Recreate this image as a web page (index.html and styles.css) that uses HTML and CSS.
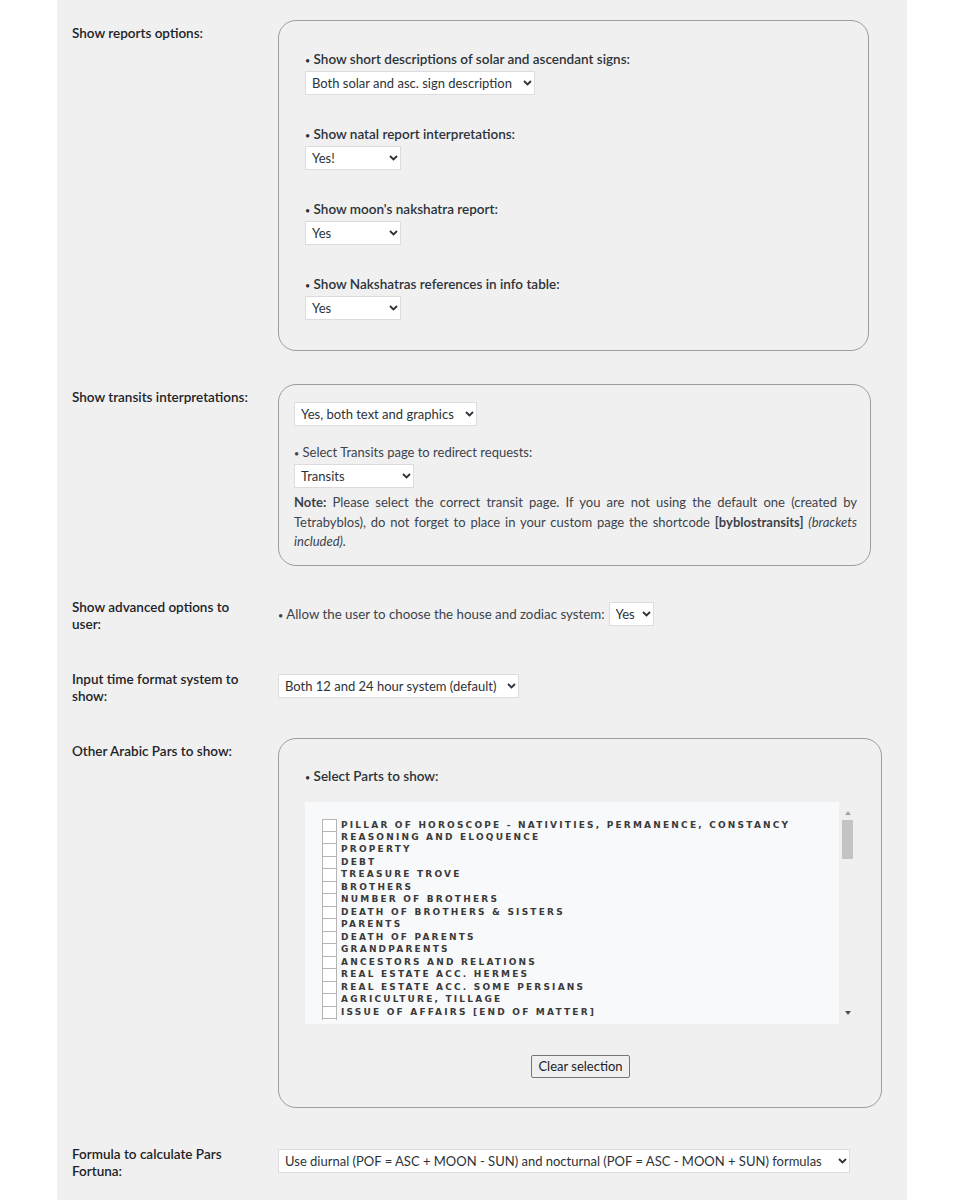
FILE: index.html
```html
<!DOCTYPE html>
<html lang="en">
<head>
  <meta charset="UTF-8" />
  <meta name="viewport" content="width=device-width, initial-scale=1.0"/>
  <title>Tetrabyblos Settings</title>
  <link rel="stylesheet" href="styles.css">
</head>
<body>
  <div class="settings">

    <div class="row">
      <div class="row-label">Show reports options:</div>
      <div class="row-field">
        <div class="group group-reports">
          <div class="opt">
            <label class="opt-label"><span class="dot">•</span> Show short descriptions of solar and ascendant signs:</label>
            <span class="pick w-solar">
              <select><option>Both solar and asc. sign description</option></select>
              <svg viewBox="0 0 9 6"><polyline points="1,1 4.5,4.5 8,1"/></svg>
            </span>
          </div>
          <div class="opt">
            <label class="opt-label"><span class="dot">•</span> Show natal report interpretations:</label>
            <span class="pick w-yes">
              <select><option>Yes!</option></select>
              <svg viewBox="0 0 9 6"><polyline points="1,1 4.5,4.5 8,1"/></svg>
            </span>
          </div>
          <div class="opt">
            <label class="opt-label"><span class="dot">•</span> Show moon's nakshatra report:</label>
            <span class="pick w-yes">
              <select><option>Yes</option></select>
              <svg viewBox="0 0 9 6"><polyline points="1,1 4.5,4.5 8,1"/></svg>
            </span>
          </div>
          <div class="opt">
            <label class="opt-label"><span class="dot">•</span> Show Nakshatras references in info table:</label>
            <span class="pick w-yes">
              <select><option>Yes</option></select>
              <svg viewBox="0 0 9 6"><polyline points="1,1 4.5,4.5 8,1"/></svg>
            </span>
          </div>
        </div>
      </div>
    </div>

    <div class="row">
      <div class="row-label">Show transits interpretations:</div>
      <div class="row-field">
        <div class="group group-transits">
          <span class="pick w-graphics">
            <select><option>Yes, both text and graphics</option></select>
            <svg viewBox="0 0 9 6"><polyline points="1,1 4.5,4.5 8,1"/></svg>
          </span>
          <label class="opt-label plain"><span class="dot">•</span> Select Transits page to redirect requests:</label>
          <span class="pick w-transits">
            <select><option>Transits</option></select>
            <svg viewBox="0 0 9 6"><polyline points="1,1 4.5,4.5 8,1"/></svg>
          </span>
          <p class="note"><b>Note:</b> Please select the correct transit page. If you are not using the default one (created by Tetrabyblos), do not forget to place in your custom page the shortcode <b>[byblostransits]</b> <i>(brackets included).</i></p>
        </div>
      </div>
    </div>

    <div class="row row-close">
      <div class="row-label">Show advanced options to user:</div>
      <div class="row-field inline">
        <span class="inline-text"><span class="dot">•</span> Allow the user to choose the house and zodiac system:</span>
        <span class="pick w-small">
          <select><option>Yes</option></select>
          <svg viewBox="0 0 9 6"><polyline points="1,1 4.5,4.5 8,1"/></svg>
        </span>
      </div>
    </div>

    <div class="row">
      <div class="row-label">Input time format system to show:</div>
      <div class="row-field inline">
        <span class="pick w-time">
          <select><option>Both 12 and 24 hour system (default)</option></select>
          <svg viewBox="0 0 9 6"><polyline points="1,1 4.5,4.5 8,1"/></svg>
        </span>
      </div>
    </div>

    <div class="row">
      <div class="row-label">Other Arabic Pars to show:</div>
      <div class="row-field">
        <div class="group group-parts">
          <label class="opt-label"><span class="dot">•</span> Select Parts to show:</label>
          <div class="parts-list">
            <ul class="parts-items">
              <li><span class="tick"></span>Pillar of horoscope - nativities, permanence, constancy</li>
              <li><span class="tick"></span>Reasoning and eloquence</li>
              <li><span class="tick"></span>Property</li>
              <li><span class="tick"></span>Debt</li>
              <li><span class="tick"></span>Treasure trove</li>
              <li><span class="tick"></span>Brothers</li>
              <li><span class="tick"></span>Number of brothers</li>
              <li><span class="tick"></span>Death of brothers &amp; sisters</li>
              <li><span class="tick"></span>Parents</li>
              <li><span class="tick"></span>Death of parents</li>
              <li><span class="tick"></span>Grandparents</li>
              <li><span class="tick"></span>Ancestors and relations</li>
              <li><span class="tick"></span>Real estate acc. Hermes</li>
              <li><span class="tick"></span>Real estate acc. some Persians</li>
              <li><span class="tick"></span>Agriculture, tillage</li>
              <li><span class="tick"></span>Issue of affairs [end of matter]</li>
              <li aria-hidden="true"><span class="tick"></span></li>
            </ul>
            <div class="scrollbar">
              <span class="arrow-up"></span>
              <span class="thumb"></span>
              <span class="arrow-down"></span>
            </div>
          </div>
          <div class="actions">
            <button type="button" class="clear-btn">Clear selection</button>
          </div>
        </div>
      </div>
    </div>

    <div class="row">
      <div class="row-label">Formula to calculate Pars Fortuna:</div>
      <div class="row-field inline">
        <span class="pick w-formula">
          <select><option>Use diurnal (POF = ASC + MOON - SUN) and nocturnal (POF = ASC - MOON + SUN) formulas</option></select>
          <svg viewBox="0 0 9 6"><polyline points="1,1 4.5,4.5 8,1"/></svg>
        </span>
      </div>
    </div>

  </div>
</body>
</html>
```

FILE: styles.css
```css
* {
  box-sizing: border-box;
}

body {
  margin: 0;
  background: #fff;
  font-family: 'Lato', 'Liberation Sans', sans-serif;
  font-size: 13px;
  color: #3c434a;
}

.settings {
  width: 850px;
  min-height: 1200px;
  margin-left: 57px;
  padding: 20px 15px 40px;
  background: #f0f0f1;
}

.row {
  display: flex;
  align-items: flex-start;
}

.row + .row {
  margin-top: 33px;
}

.row.row-close {
  margin-top: 28px;
}

.row-label {
  flex: 0 0 182px;
  margin-right: 24px;
  padding-top: 5px;
  line-height: 17px;
  font-size: 13.5px;
  font-weight: 600;
  color: #1d2327;
}

.row-field {
  flex: 1;
  min-width: 0;
}

.row-field.inline {
  display: flex;
  align-items: center;
  gap: 4px;
  padding-top: 8px;
}

.inline-text {
  font-size: 13.3px;
}

.dot {
  font-size: 9px;
  font-weight: 400;
  line-height: 0;
}

/* rounded option groups */
.group {
  border: 1px solid #9c9c9c;
  border-radius: 18px;
}

.group-reports {
  width: 591px;
  padding: 28px 26px 30px;
}

.group-transits {
  display: flex;
  flex-direction: column;
  align-items: flex-start;
  width: 593px;
  padding: 17px 13px 13px 15px;
}

.group-parts {
  width: 604px;
  padding: 27px 25px 29px 26px;
}

.opt {
  display: flex;
  flex-direction: column;
  align-items: flex-start;
}

.opt + .opt {
  margin-top: 29px;
}

.opt-label {
  display: block;
  line-height: 20px;
  font-size: 13.5px;
  font-weight: 600;
  color: #2c3338;
}

.opt-label.plain {
  margin-top: 16px;
  font-size: 13px;
  font-weight: 400;
  color: #3c434a;
}

.opt .pick,
.opt-label.plain + .pick {
  margin-top: 2px;
}

/* selects */
.pick {
  position: relative;
  display: inline-block;
  flex-shrink: 0;
  vertical-align: middle;
}

.pick select {
  -webkit-appearance: none;
  appearance: none;
  display: block;
  width: 100%;
  height: 24px;
  padding: 0 14px 0 6px;
  border: 1px solid #dcdcde;
  border-radius: 0;
  background: #fff;
  font-family: inherit;
  font-size: 13px;
  color: #2c3338;
}

.pick svg {
  position: absolute;
  right: 3px;
  top: 9px;
  width: 9px;
  height: 6px;
  fill: none;
  stroke: #2c3338;
  stroke-width: 1.8;
  pointer-events: none;
}

.w-solar { width: 230px; }
.w-yes { width: 96px; }
.w-graphics { width: 183px; }
.w-transits { width: 120px; }
.w-small { width: 45px; }
.w-time { width: 241px; }
.w-formula { width: 572px; }

.note {
  margin: 5px 0 0;
  line-height: 19.5px;
  text-align: justify;
}

/* arabic parts list */
.parts-list {
  display: flex;
  align-items: flex-start;
  height: 222px;
  margin-top: 16px;
  background: #f8f9fa;
}

.parts-items {
  flex: 1;
  height: 218px;
  margin: 0;
  padding: 17px 0 0 17px;
  list-style: none;
  overflow: hidden;
}

.parts-items li {
  display: flex;
  align-items: flex-start;
  height: 12.47px;
  line-height: 12.47px;
  font-family: 'DejaVu Sans', Verdana, sans-serif;
  font-size: 9px;
  font-weight: bold;
  letter-spacing: 2.2px;
  text-transform: uppercase;
  white-space: nowrap;
  color: #3a3a3a;
}

.tick {
  flex: 0 0 15px;
  height: 14px;
  margin-right: 4px;
  border: 1px solid #b5b5b5;
  background: #fff;
}

.scrollbar {
  flex: 0 0 17px;
  align-self: stretch;
  display: flex;
  flex-direction: column;
  align-items: center;
  padding: 9px 0 9px;
  background: #f0f0f0;
}

.arrow-up {
  border-left: 3.5px solid transparent;
  border-right: 3.5px solid transparent;
  border-bottom: 4px solid #a3a3a3;
}

.thumb {
  width: 11px;
  height: 39px;
  margin-top: 5px;
  background: #c4c4c4;
}

.arrow-down {
  margin-top: auto;
  border-left: 3.5px solid transparent;
  border-right: 3.5px solid transparent;
  border-top: 4px solid #505050;
}

.actions {
  display: flex;
  justify-content: center;
  margin-top: 31px;
}

.clear-btn {
  height: 23px;
  padding: 0 6px;
  border: 1px solid #767676;
  border-radius: 2px;
  background: #efefef;
  font-family: inherit;
  font-size: 13px;
  color: #1d2327;
}
```
